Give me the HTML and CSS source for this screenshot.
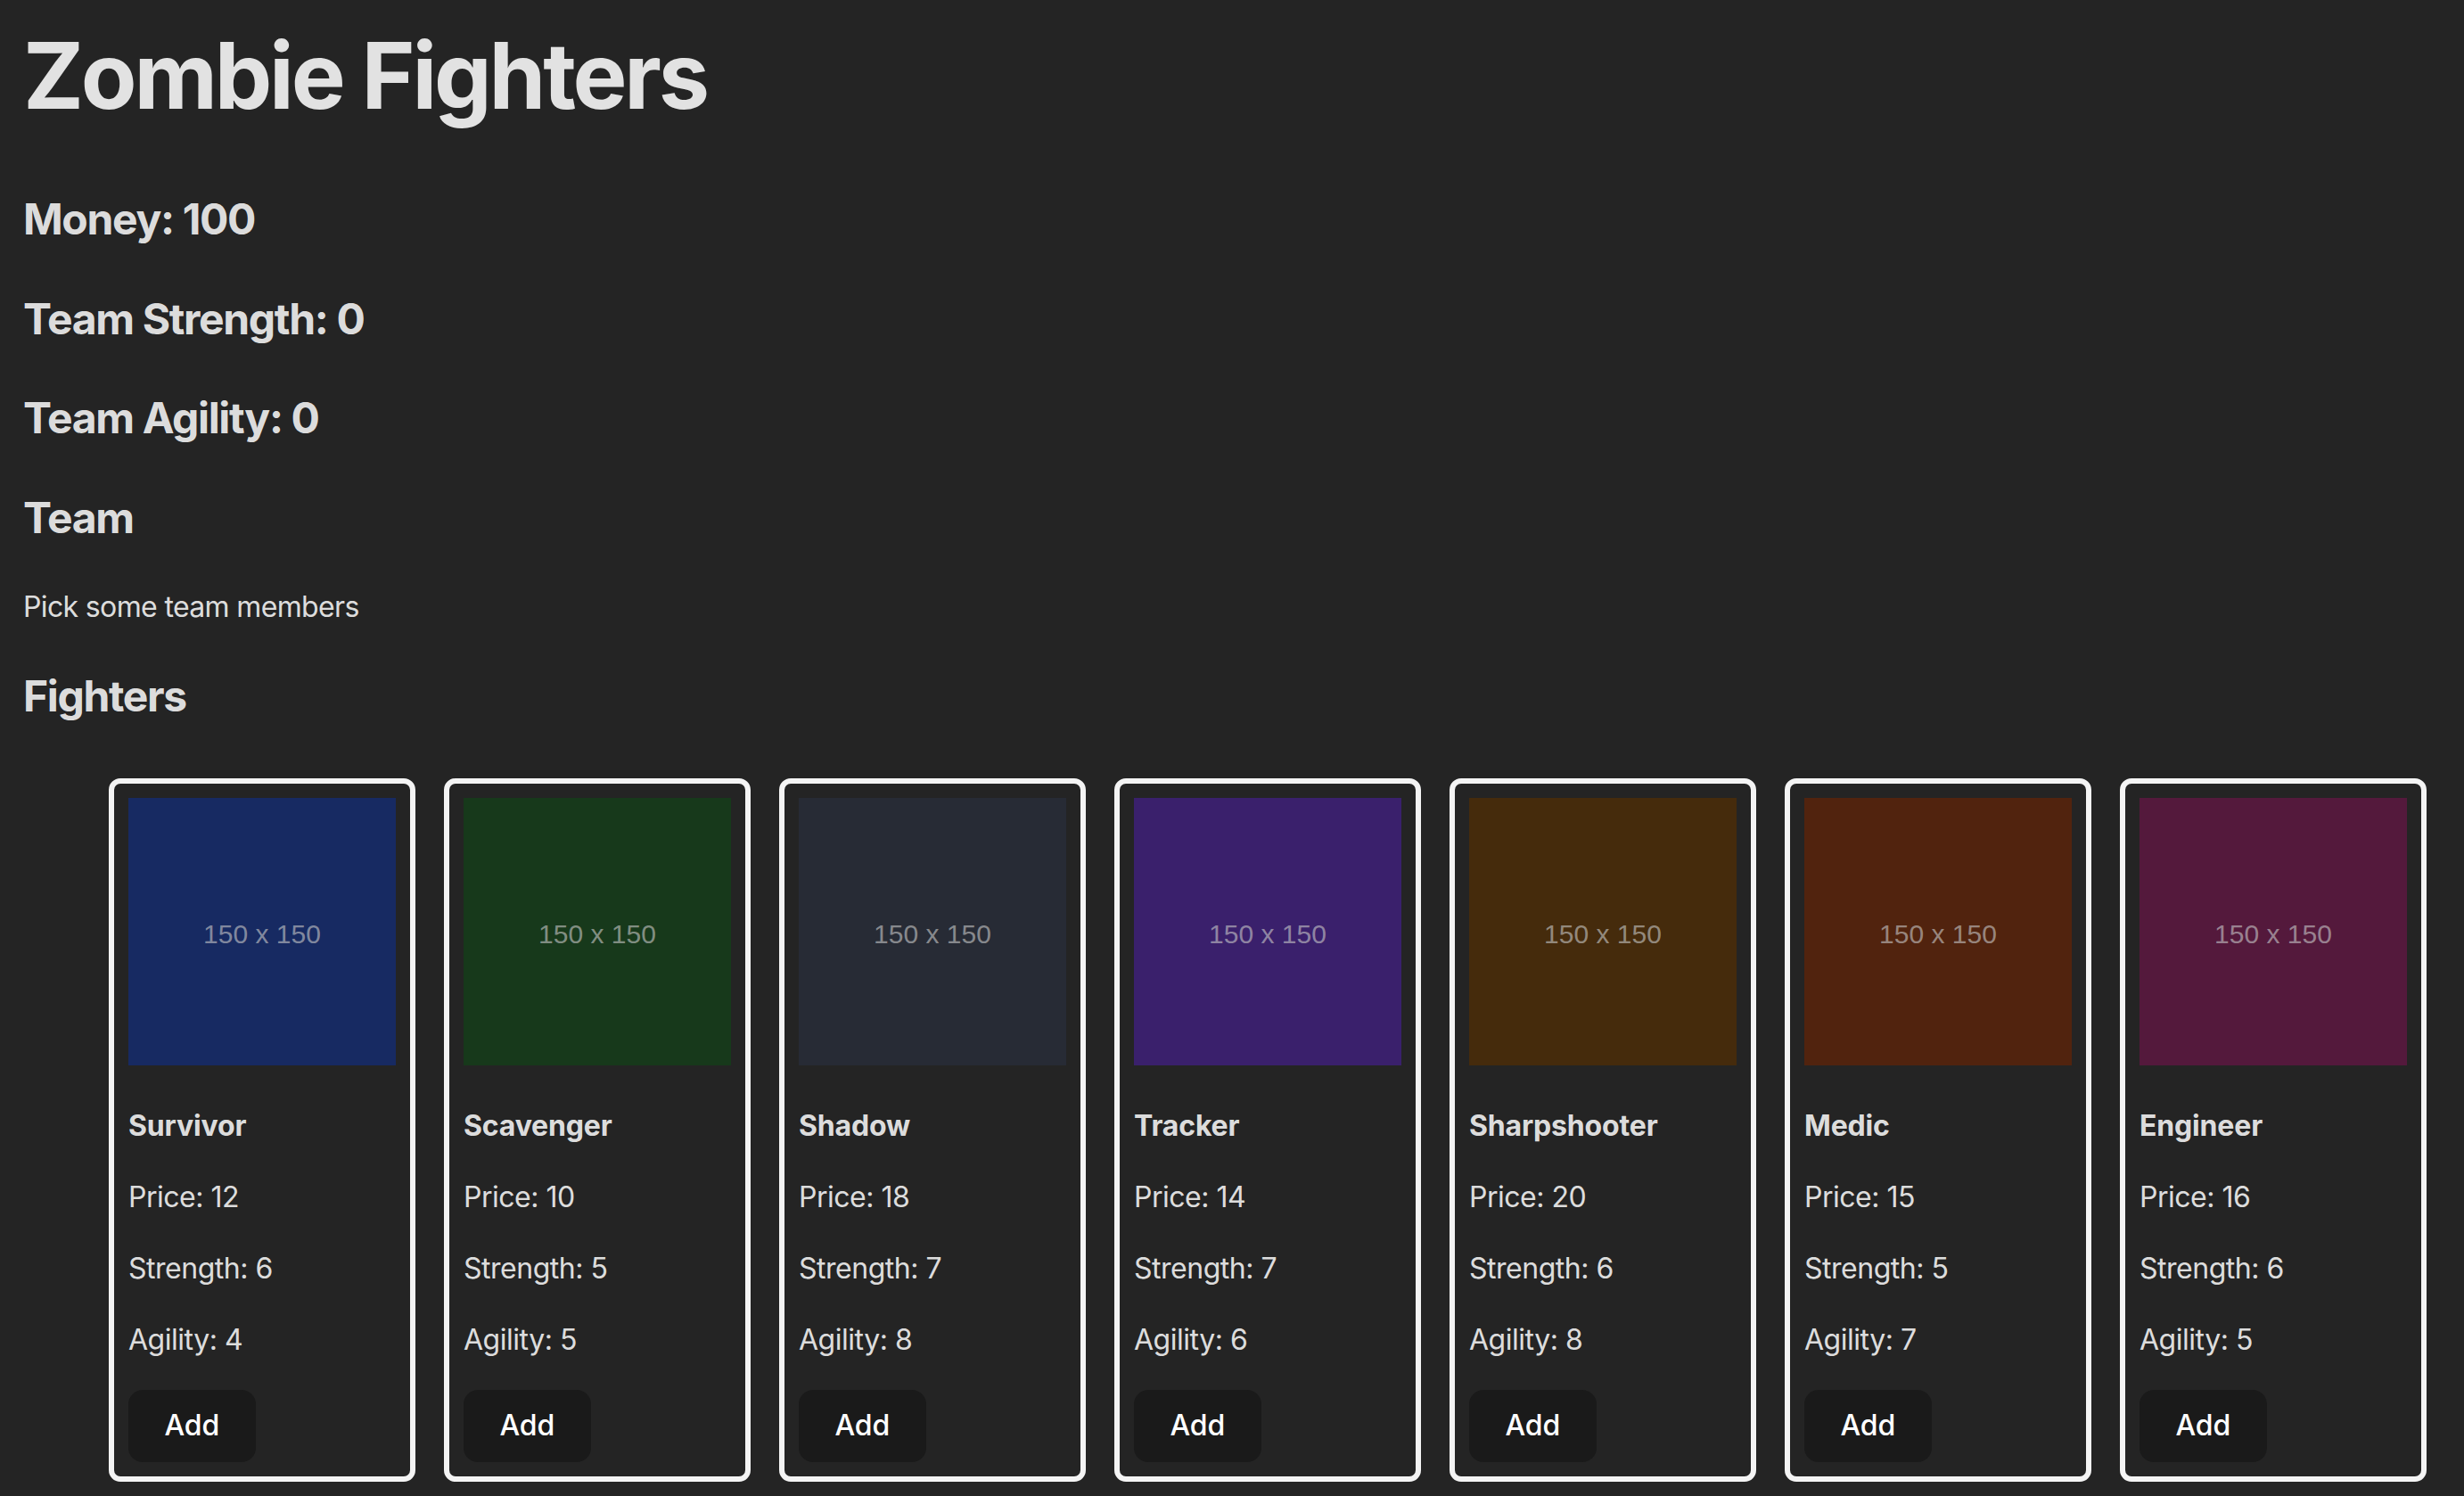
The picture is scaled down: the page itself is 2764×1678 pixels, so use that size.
FILE: index.html
```html
<!DOCTYPE html>
<html lang="en">
<head>
<meta charset="UTF-8">
<title>Zombie Fighters</title>
<link rel="stylesheet" href="styles.css">
</head>
<body>
<div class="app">
  <h1 class="title">Zombie Fighters</h1>
  <h2 class="stat">Money: 100</h2>
  <h2 class="stat">Team Strength: 0</h2>
  <h2 class="stat">Team Agility: 0</h2>
  <h2 class="stat">Team</h2>
  <p class="note">Pick some team members</p>
  <h2 class="stat">Fighters</h2>
  <ul class="fighters">
    <li class="card">
      <div class="photo photo-survivor"><span>150 x 150</span></div>
      <p class="name">Survivor</p>
      <p class="line">Price: 12</p>
      <p class="line">Strength: 6</p>
      <p class="line">Agility: 4</p>
      <button class="add">Add</button>
    </li>
    <li class="card">
      <div class="photo photo-scavenger"><span>150 x 150</span></div>
      <p class="name">Scavenger</p>
      <p class="line">Price: 10</p>
      <p class="line">Strength: 5</p>
      <p class="line">Agility: 5</p>
      <button class="add">Add</button>
    </li>
    <li class="card">
      <div class="photo photo-shadow"><span>150 x 150</span></div>
      <p class="name">Shadow</p>
      <p class="line">Price: 18</p>
      <p class="line">Strength: 7</p>
      <p class="line">Agility: 8</p>
      <button class="add">Add</button>
    </li>
    <li class="card">
      <div class="photo photo-tracker"><span>150 x 150</span></div>
      <p class="name">Tracker</p>
      <p class="line">Price: 14</p>
      <p class="line">Strength: 7</p>
      <p class="line">Agility: 6</p>
      <button class="add">Add</button>
    </li>
    <li class="card">
      <div class="photo photo-sharpshooter"><span>150 x 150</span></div>
      <p class="name">Sharpshooter</p>
      <p class="line">Price: 20</p>
      <p class="line">Strength: 6</p>
      <p class="line">Agility: 8</p>
      <button class="add">Add</button>
    </li>
    <li class="card">
      <div class="photo photo-medic"><span>150 x 150</span></div>
      <p class="name">Medic</p>
      <p class="line">Price: 15</p>
      <p class="line">Strength: 5</p>
      <p class="line">Agility: 7</p>
      <button class="add">Add</button>
    </li>
    <li class="card">
      <div class="photo photo-engineer"><span>150 x 150</span></div>
      <p class="name">Engineer</p>
      <p class="line">Price: 16</p>
      <p class="line">Strength: 6</p>
      <p class="line">Agility: 5</p>
      <button class="add">Add</button>
    </li>
  </ul>
</div>
</body>
</html>
```

FILE: styles.css
```css
html {
  background: #242424;
}

body {
  margin: 0;
  background: #242424;
  color: rgba(255, 255, 255, 0.87);
  font-family: "Inter", "Noto Sans", sans-serif;
  font-size: 32px;
  line-height: 1.5;
  font-weight: 400;
  -webkit-font-smoothing: antialiased;
}

.app {
  padding: 0 26px;
  overflow: hidden;
}

.title {
  font-size: 102.4px;
  line-height: 1.1;
  font-weight: 700;
  letter-spacing: -0.031em;
  margin: 28.5px 0 68.6px;
}

.stat {
  font-size: 48px;
  line-height: 72px;
  font-weight: 700;
  letter-spacing: -0.028em;
  margin: 39.84px 0;
}

.note {
  letter-spacing: -0.02em;
  margin: 32px 0;
}

.fighters {
  list-style: none;
  display: flex;
  gap: 32px;
  margin: 0;
  padding: 16px 0 16px 96px;
}

.card {
  flex: 0 0 auto;
  width: 300px;
  padding: 16px;
  border: 6px solid #f4f4f4;
  border-radius: 13px;
}

.photo {
  width: 300px;
  height: 300px;
  display: flex;
  align-items: center;
  justify-content: center;
  padding-top: 7px;
  box-sizing: border-box;
  margin: 0;
}

.photo span {
  font-family: "Liberation Sans", Arial, sans-serif;
  font-size: 30px;
  line-height: normal;
  color: rgba(200, 200, 200, 0.62);
}

.photo-survivor { background: #172a62; }
.photo-scavenger { background: #17391b; }
.photo-shadow { background: #272b35; }
.photo-tracker { background: #3a206c; }
.photo-sharpshooter { background: #452b0c; }
.photo-medic { background: #51230e; }
.photo-engineer { background: #54193c; }

.name {
  font-weight: 700;
  letter-spacing: -0.005em;
  margin: 44px 0 32px;
}

.line {
  letter-spacing: -0.015em;
  margin: 32px 0;
}

.add {
  font-family: inherit;
  font-size: 32px;
  font-weight: 500;
  line-height: 38.7px;
  color: #ffffff;
  background: #1a1a1a;
  border: 2px solid transparent;
  border-radius: 16px;
  padding: 19.2px 38.4px;
  cursor: pointer;
}
```
